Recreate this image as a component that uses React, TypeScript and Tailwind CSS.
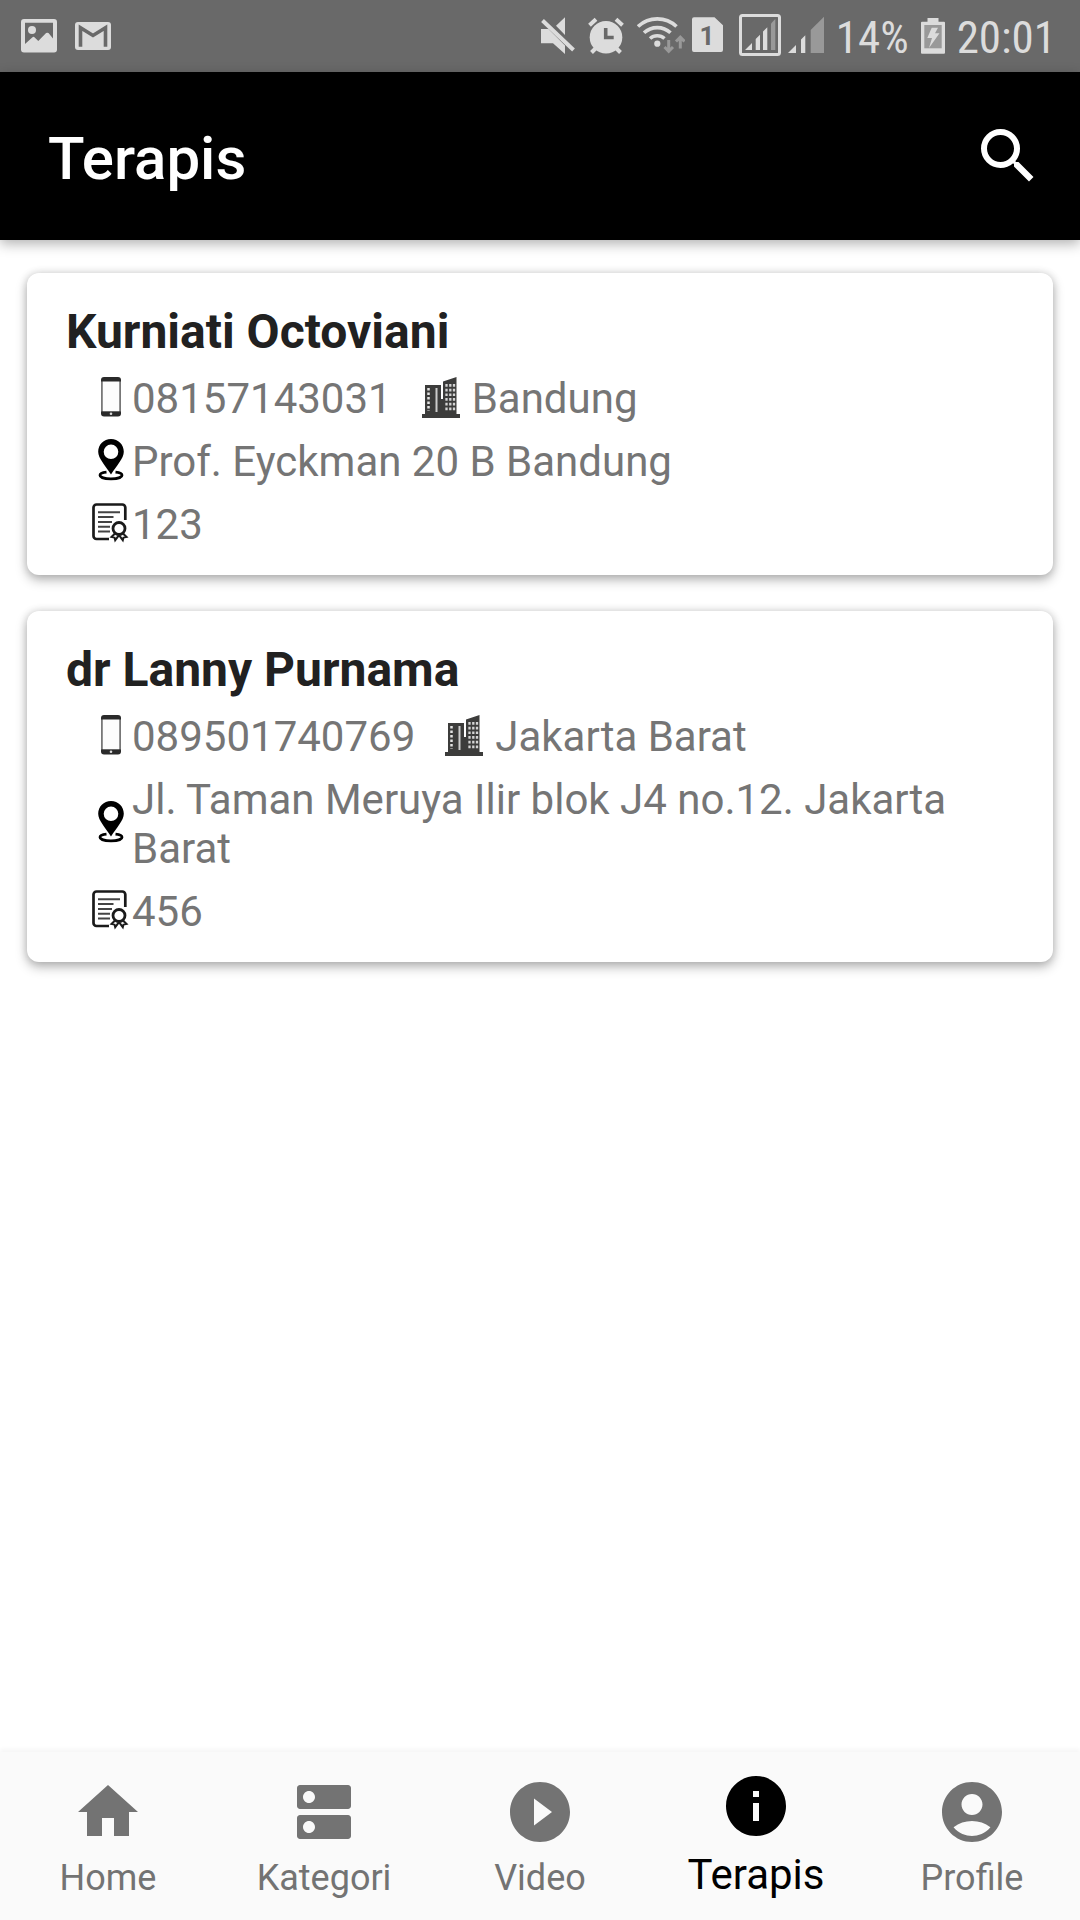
import React from 'react';
import {
  MdAccountCircle,
  MdDns,
  MdHome,
  MdInfo,
  MdPlayCircleFilled,
  MdSearch,
} from 'react-icons/md';

interface Therapist {
  name: string;
  phone: string;
  city: string;
  address: string;
  certificate: string;
}

const therapists: Therapist[] = [
  {
    name: 'Kurniati Octoviani',
    phone: '08157143031',
    city: 'Bandung',
    address: 'Prof. Eyckman 20 B Bandung',
    certificate: '123',
  },
  {
    name: 'dr Lanny Purnama',
    phone: '089501740769',
    city: 'Jakarta Barat',
    address: 'Jl. Taman Meruya Ilir blok J4 no.12. Jakarta Barat',
    certificate: '456',
  },
];

const tabs = [
  { label: 'Home', icon: MdHome },
  { label: 'Kategori', icon: MdDns },
  { label: 'Video', icon: MdPlayCircleFilled },
  { label: 'Terapis', icon: MdInfo, active: true },
  { label: 'Profile', icon: MdAccountCircle },
];

const PictureIcon = () => (
  <svg className="h-11 w-9" viewBox="0 0 36 44" fill="currentColor">
    <path
      fillRule="evenodd"
      d="M3 5h30a3 3 0 0 1 3 3v27.500a3 3 0 0 1-3 3H3a3 3 0 0 1-3-3V8a3 3 0 0 1 3-3zM4 8.700V30l7.500-6.800q1.200-.8 2.200.2l3.600 3.500 7.800-7.800q1.200-.9 2.400 0l4.500 5.400V8.700z"
    />
    <circle cx="11" cy="16" r="4" />
  </svg>
);

const MailIcon = () => (
  <svg className="h-11 w-9" viewBox="0 0 36 44">
    <rect y="8" width="36" height="28" rx="3" fill="currentColor" />
    <path
      d="M5.500 32.700V13.800L18 21.500l12.500-7.700v18.900"
      fill="none"
      stroke="#696969"
      strokeWidth="3.600"
    />
  </svg>
);

const MutedIcon = () => (
  <svg className="h-11 w-[34px]" viewBox="0 0 34 44" fill="currentColor">
    <path d="M15 11.700l9-8.500V21zM0 15h7.500L24 31.500V40L12 29.300H0z" />
    <path d="M1.500 6.500l31 29.500" stroke="currentColor" strokeWidth="4" />
  </svg>
);

const AlarmIcon = () => (
  <svg className="h-11 w-9" viewBox="0 0 36 44" fill="none">
    <circle cx="18" cy="23.300" r="16.300" fill="currentColor" />
    <path
      d="M1.500 11.200l6.500-6M34.500 11.200l-6.500-6M3.500 38.500l4-4M32.500 38.500l-4-4"
      stroke="currentColor"
      strokeWidth="4"
    />
    <path d="M17.700 14v9.500h8" stroke="#696969" strokeWidth="3.600" />
  </svg>
);

const WifiIcon = () => (
  <svg className="h-11 w-12" viewBox="0 0 48 44" fill="none">
    <g stroke="currentColor" strokeWidth="3.600">
      <path d="M1 12.500a28 28 0 0 1 38.500 0" />
      <path d="M7 18.800a19.500 19.500 0 0 1 26.500 0" />
      <path d="M13 24.500a11 11 0 0 1 14.500 0" />
    </g>
    <circle cx="20.300" cy="29.700" r="3.100" fill="currentColor" />
    <path
      d="M31.700 26v11M27.500 33l4.200 4.300L36 33M43.300 34.500v-11M39 27.500l4.300-4.300 4.200 4.300"
      stroke="#999"
      strokeWidth="3"
    />
  </svg>
);

const SimIcon = () => (
  <svg className="h-11 w-[31px]" viewBox="0 0 31 44">
    <path
      d="M2 3.300h20.500l8.500 8v24.700a2 2 0 0 1-2 2H2a2 2 0 0 1-2-2V5.300a2 2 0 0 1 2-2z"
      fill="currentColor"
    />
    <text
      x="15"
      y="31"
      textAnchor="middle"
      className="font-[Roboto,sans-serif] text-[26px] font-bold"
      fill="#696969"
    >
      1
    </text>
  </svg>
);

const BoxedSignalIcon = () => (
  <svg className="h-11 w-[42px]" viewBox="0 0 42 44" fill="currentColor">
    <rect
      x="1.500"
      y="1.500"
      width="39"
      height="39"
      rx="2"
      fill="none"
      stroke="currentColor"
      strokeWidth="3"
    />
    <path d="M6 36l7-7v7zM16.700 36V25l4.300-4.300V36zM24 36V17.500l4.300-4.300V36z" />
    <path d="M32 36V9.500L36.300 5v31z" fill="#999" />
  </svg>
);

const SignalIcon = () => (
  <svg className="h-11 w-9" viewBox="0 0 36 44" fill="currentColor">
    <path d="M0 39l8-8v8zM13 39V25.500l4.300-4.300V39z" />
    <path d="M22.700 39V16L36 2.700V39z" fill="#999" />
  </svg>
);

const BatteryIcon = () => (
  <svg className="h-11 w-6" viewBox="0 0 24 44" fill="currentColor">
    <path d="M6.500 4h11v3.700H23a1 1 0 0 1 1 1v30a1 1 0 0 1-1 1H1a1 1 0 0 1-1-1v-30a1 1 0 0 1 1-1h5.500z" />
    <path d="M3.300 11h17.400v23.300H3.300z" fill="#999" />
    <path d="M10.700 13.700H17l-3 5.500h4.500L8 34l3-10H6.300z" />
  </svg>
);

const PhoneIcon = () => (
  <svg className="mb-1 h-[42px] w-[42px] shrink-0" viewBox="0 0 42 42">
    <rect x="11" y="1" width="20" height="39.500" rx="3" fill="#2a2a2a" />
    <path d="M12.500 5.500h17v29.800h-17z" fill="#fcfcfc" />
    <path d="M11.500 5.500v30M30.500 5.500v30" stroke="#777" />
    <circle cx="21" cy="37.800" r="1.300" fill="#ddd" />
  </svg>
);

const CityIcon = () => (
  <svg
    className="mb-1 h-[42px] w-[42px] shrink-0"
    viewBox="0 0 42 42"
    fill="#3c3c3b"
  >
    <path d="M2 38h38v4H2zM5 9h16v29H5zM21 23h3v15h-3zM23 5.500L36.500 1v37H23z" />
    <path d="M16.500 12v24" stroke="#ccc" strokeWidth="2" />
    <path
      d="M8.500 12v23"
      stroke="#e4e4e4"
      strokeWidth="2.500"
      strokeDasharray="2.500 2"
    />
    <path
      d="M26.500 8v28M30.300 8v28M34 8v28"
      stroke="#d4d4d4"
      strokeWidth="2.300"
      strokeDasharray="2.700 2"
    />
  </svg>
);

const PinIcon = () => (
  <svg className="mb-1 h-[42px] w-[42px] shrink-0" viewBox="0 0 42 42">
    <path
      fillRule="evenodd"
      d="M21 0C13.700 0 8.200 5.700 8.200 12.700c0 6.800 7.300 13.800 12.800 22.800 5.500-9 12.800-16 12.800-22.800C33.800 5.700 28.300 0 21 0zm0 5.500a7.300 7.300 0 1 1 0 14.600 7.300 7.300 0 0 1 0-14.600z"
    />
    <path
      d="M16.500 33.200c-4 .4-6.500 1.500-6.500 3 0 2.200 5 3.600 11 3.600s11-1.400 11-3.600c0-1.500-2.500-2.600-6.500-3"
      fill="none"
      stroke="#000"
      strokeWidth="2.800"
    />
  </svg>
);

const CertificateIcon = () => (
  <svg
    className="mb-1 h-[42px] w-[42px] shrink-0"
    viewBox="0 0 42 42"
    fill="none"
    stroke="#1a1a1a"
  >
    <path
      d="M19 37H6.500a3 3 0 0 1-3-3V5.500a3 3 0 0 1 3-3h25.800a3 3 0 0 1 3 3V18"
      strokeWidth="2.700"
    />
    <path
      d="M8 10.300h22M8 15h15.500M8 20h14M8 24.800h12M8 29.500h12"
      stroke="#444"
      strokeWidth="2"
    />
    <circle cx="29" cy="26.500" r="6" strokeWidth="2.800" />
    <path
      d="M25 31.500l-3.500 3.500 3 .6.700 2.600 3.800-5M33 31.500l3.500 3.500-3 .6-.7 2.600-3.800-5"
      strokeWidth="2"
    />
  </svg>
);

const StatusBar = () => (
  <div className="flex h-[72px] items-center justify-between bg-[#696969] pr-6 pl-[21px] text-[#dcdcdc]">
    <div className="flex items-center gap-[18px]">
      <PictureIcon />
      <MailIcon />
    </div>
    <div className="flex items-center gap-3">
      <div className="flex items-center gap-4">
        <div className="flex items-center gap-[13px]">
          <MutedIcon />
          <AlarmIcon />
          <div className="flex items-center gap-[7px]">
            <WifiIcon />
            <SimIcon />
          </div>
        </div>
        <div className="flex items-center gap-[7px]">
          <BoxedSignalIcon />
          <SignalIcon />
        </div>
      </div>
      <div className="flex items-center gap-3 font-['Roboto_Condensed',Roboto,sans-serif] text-[45px] leading-[52px]">
        <span className="pt-1">14%</span>
        <BatteryIcon />
        <span className="pt-1">20:01</span>
      </div>
    </div>
  </div>
);

const TherapistCard = ({ therapist }: { therapist: Therapist }) => (
  <article className="rounded-xl bg-white pt-[31px] pr-8 pb-[26px] pl-[39px] shadow-[0_5px_12px_rgba(0,0,0,0.28),0_0_8px_rgba(0,0,0,0.14)]">
    <h2 className="text-[48px] leading-[56px] font-bold text-[#212121]">
      {therapist.name}
    </h2>
    <div className="mt-[14px] flex flex-col gap-[14px] pl-6 text-[42px] leading-[49px] text-[#757575]">
      <div className="flex items-center">
        <PhoneIcon />
        <span className="mr-7">{therapist.phone}</span>
        <CityIcon />
        <span className="ml-2.5">{therapist.city}</span>
      </div>
      <div className="flex items-center">
        <PinIcon />
        <span>{therapist.address}</span>
      </div>
      <div className="flex items-center">
        <CertificateIcon />
        <span>{therapist.certificate}</span>
      </div>
    </div>
  </article>
);

const TabBar = () => (
  <nav className="grid h-[168px] grid-cols-5 bg-[#fafafa] shadow-[0_-3px_4px_rgba(0,0,0,0.04)]">
    {tabs.map(({ label, icon: Icon, active }) => (
      <a
        key={label}
        href="#"
        aria-current={active ? 'page' : undefined}
        className={`flex flex-col items-center justify-end gap-2 pb-5 ${
          active
            ? 'text-[42px] leading-[50px] text-black'
            : 'text-[36px] leading-[44px] text-[#737373]'
        }`}
      >
        <Icon className="size-[72px]" />
        {label}
      </a>
    ))}
  </nav>
);

const App = (): React.JSX.Element => {
  return (
    <div className="flex min-h-screen flex-col bg-white font-[Roboto,sans-serif]">
      <StatusBar />
      <header className="flex h-[168px] items-center justify-between bg-black pr-9 pl-12 text-white shadow-[0_4px_12px_rgba(0,0,0,0.3)]">
        <h1 className="pt-1.5 text-[60px] leading-[70px] font-medium">
          Terapis
        </h1>
        <button type="button" aria-label="Search">
          <MdSearch className="size-[72px]" />
        </button>
      </header>
      <main className="flex grow flex-col gap-9 px-[27px] py-[33px]">
        {therapists.map((therapist) => (
          <TherapistCard key={therapist.name} therapist={therapist} />
        ))}
      </main>
      <TabBar />
    </div>
  );
};

export default App;
